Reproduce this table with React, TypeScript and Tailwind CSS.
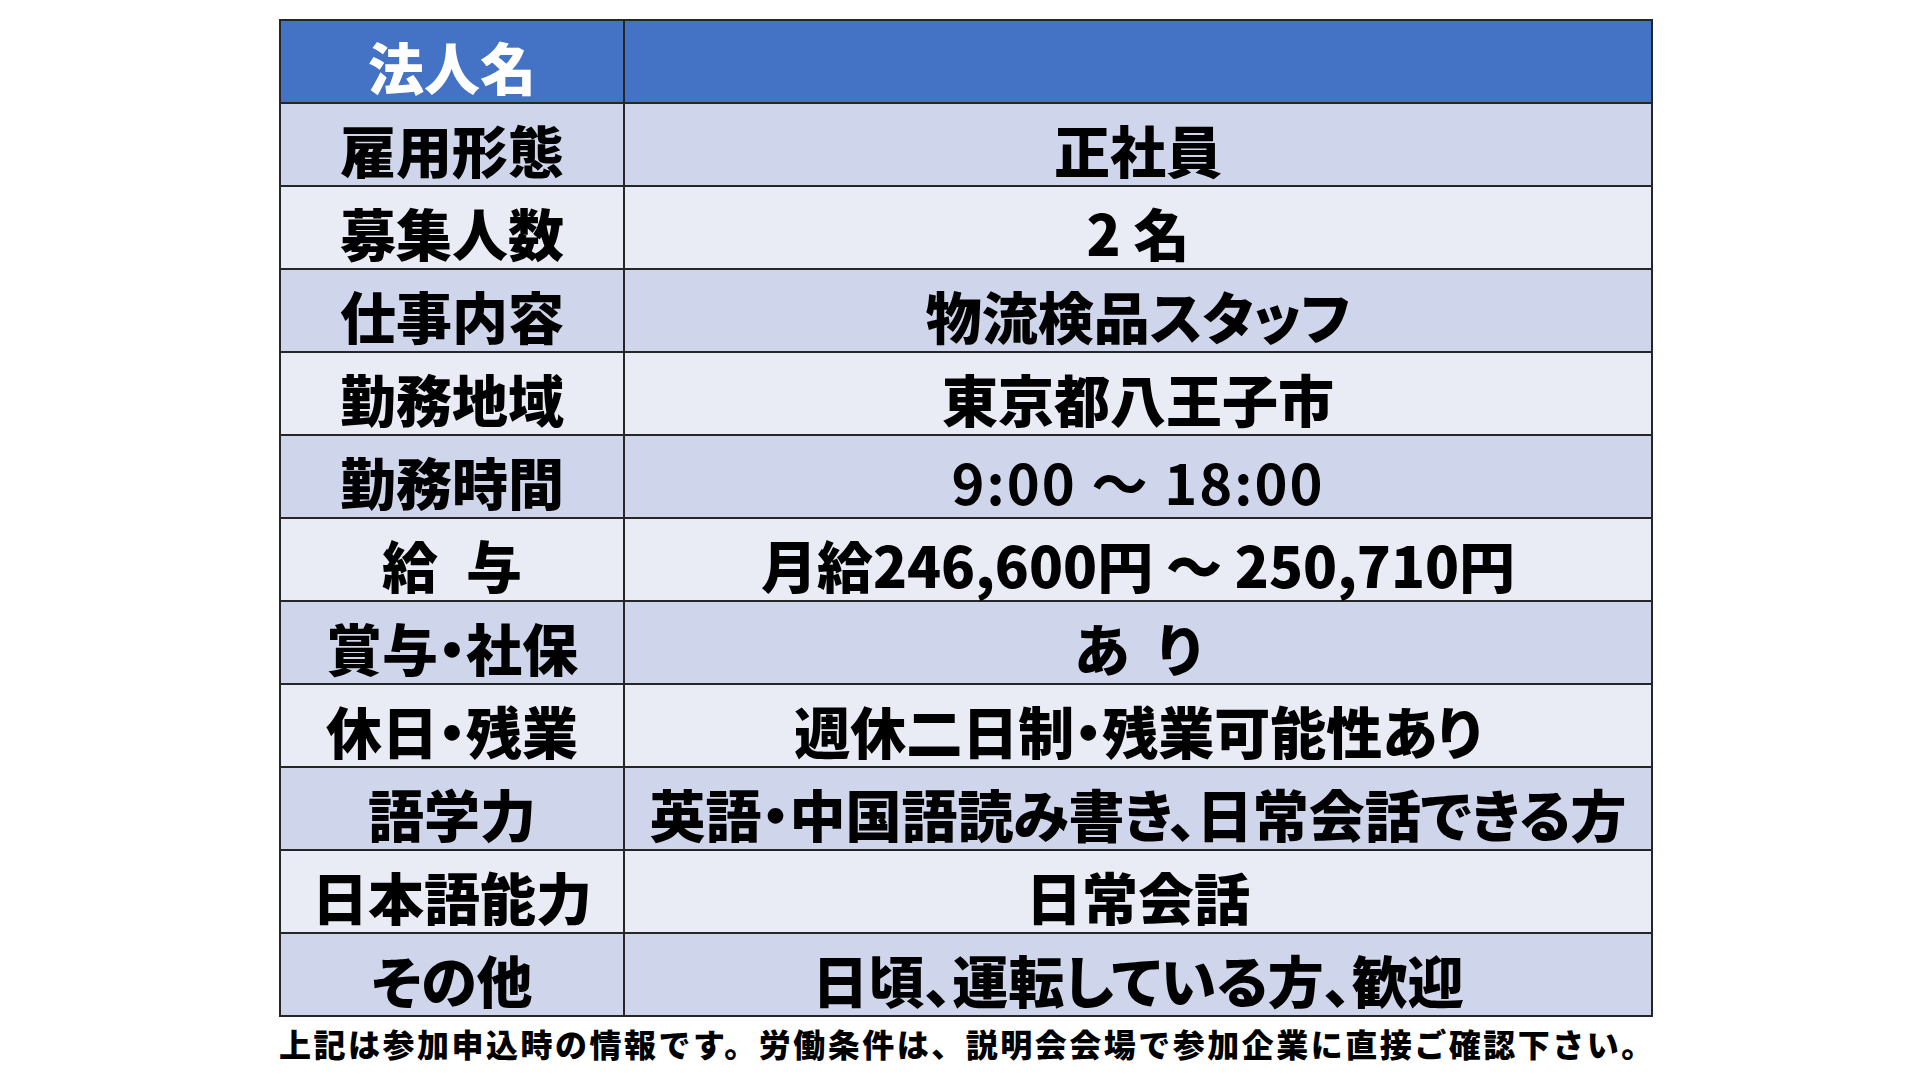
import React from 'react';

type Row = { label: string; value: string; bg: string; extra?: string };

const rows: Row[] = [
  { label: '雇用形態', value: '正社員', bg: 'bg-[#cfd5ea]' },
  { label: '募集人数', value: '2 名', bg: 'bg-[#e9ebf5]' },
  { label: '仕事内容', value: '物流検品スタッフ', bg: 'bg-[#cfd5ea]' },
  { label: '勤務地域', value: '東京都八王子市', bg: 'bg-[#e9ebf5]' },
  { label: '勤務時間', value: '9:00 ～ 18:00', bg: 'bg-[#cfd5ea]', extra: 'tracking-[2px] font-bold' },
  { label: '給\u2002与', value: '月給246,600円 ～ 250,710円', bg: 'bg-[#e9ebf5]' },
  { label: '賞与・社保', value: 'あ\u2002り', bg: 'bg-[#cfd5ea]' },
  { label: '休日・残業', value: '週休二日制・残業可能性あり', bg: 'bg-[#e9ebf5]' },
  { label: '語学力', value: '英語・中国語読み書き、日常会話できる方', bg: 'bg-[#cfd5ea]' },
  { label: '日本語能力', value: '日常会話', bg: 'bg-[#e9ebf5]' },
  { label: 'その他', value: '日頃、運転している方、歓迎', bg: 'bg-[#cfd5ea]' },
];

const font = "font-['Noto_Sans_CJK_JP','Noto_Sans',sans-serif]";
const cell = 'border-2 border-[#262626] h-[83px] p-0 pt-[9px] text-center align-middle whitespace-nowrap';

export default function App() {
  return (
    <div className={`w-[1920px] h-[1080px] bg-white ${font} overflow-hidden`}>
      <div className="pl-[279px] pt-[19px]">
        <table className="border-collapse table-fixed w-[1374px] text-[56px] leading-none font-black text-black [font-feature-settings:'palt']">
          <colgroup>
            <col className="w-[344px]" />
            <col />
          </colgroup>
          <tbody>
            <tr className="bg-[#4472c4] text-white">
              <td className={cell}>法人名</td>
              <td className={cell}></td>
            </tr>
            {rows.map((r) => (
              <tr key={r.label} className={r.bg}>
                <td className={cell}>{r.label}</td>
                <td className={`${cell} ${r.extra ?? ''}`}>{r.value}</td>
              </tr>
            ))}
          </tbody>
        </table>
        <p className="mt-[10px] text-[32px] leading-none font-black tracking-[2.5px] text-black whitespace-nowrap">
          上記は参加申込時の情報です。労働条件は、説明会会場で参加企業に直接ご確認下さい。
        </p>
      </div>
    </div>
  );
}
